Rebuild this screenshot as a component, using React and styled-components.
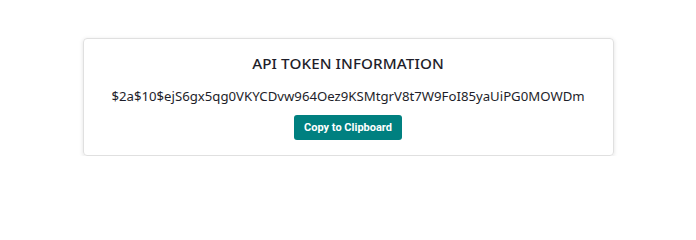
import React from "react";
import styled, { createGlobalStyle } from "styled-components";

const Global = createGlobalStyle`
  html, body { margin: 0; padding: 0; background: #fff; }
  body { font-family: "Noto Sans", "Liberation Sans", sans-serif; color: #222; }
`;

const Page = styled.div`
  display: flex;
  justify-content: center;
  padding-top: 38px;
`;

const Card = styled.div`
  width: 531px;
  height: 118px;
  box-sizing: border-box;
  border: 1px solid #e0e0e0;
  border-radius: 4px;
  box-shadow: 0 1px 4px rgba(0, 0, 0, 0.12);
  display: flex;
  flex-direction: column;
  align-items: center;
  padding-top: 13px;
`;

const Title = styled.h2`
  margin: 0;
  font-size: 15.2px;
  font-weight: 500;
  line-height: 22px;
  letter-spacing: 0.1px;
  color: #1e1e2a;
`;

const Token = styled.div`
  margin-top: 12px;
  font-size: 13.2px;
  line-height: 20px;
  color: #1e1e2a;
`;

const Button = styled.button`
  margin-top: 9px;
  width: 108px;
  height: 25px;
  border: none;
  border-radius: 3px;
  background: #008080;
  color: #fff;
  font-family: Roboto, "Liberation Sans", sans-serif;
  font-size: 11px;
  font-weight: 700;
  cursor: pointer;
  padding: 0;
`;

export default function App() {
  return (
    <>
      <Global />
      <Page>
        <Card>
          <Title>API TOKEN INFORMATION</Title>
          <Token>$2a$10$ejS6gx5qg0VKYCDvw964Oez9KSMtgrV8t7W9FoI85yaUiPG0MOWDm</Token>
          <Button>Copy to Clipboard</Button>
        </Card>
      </Page>
    </>
  );
}
